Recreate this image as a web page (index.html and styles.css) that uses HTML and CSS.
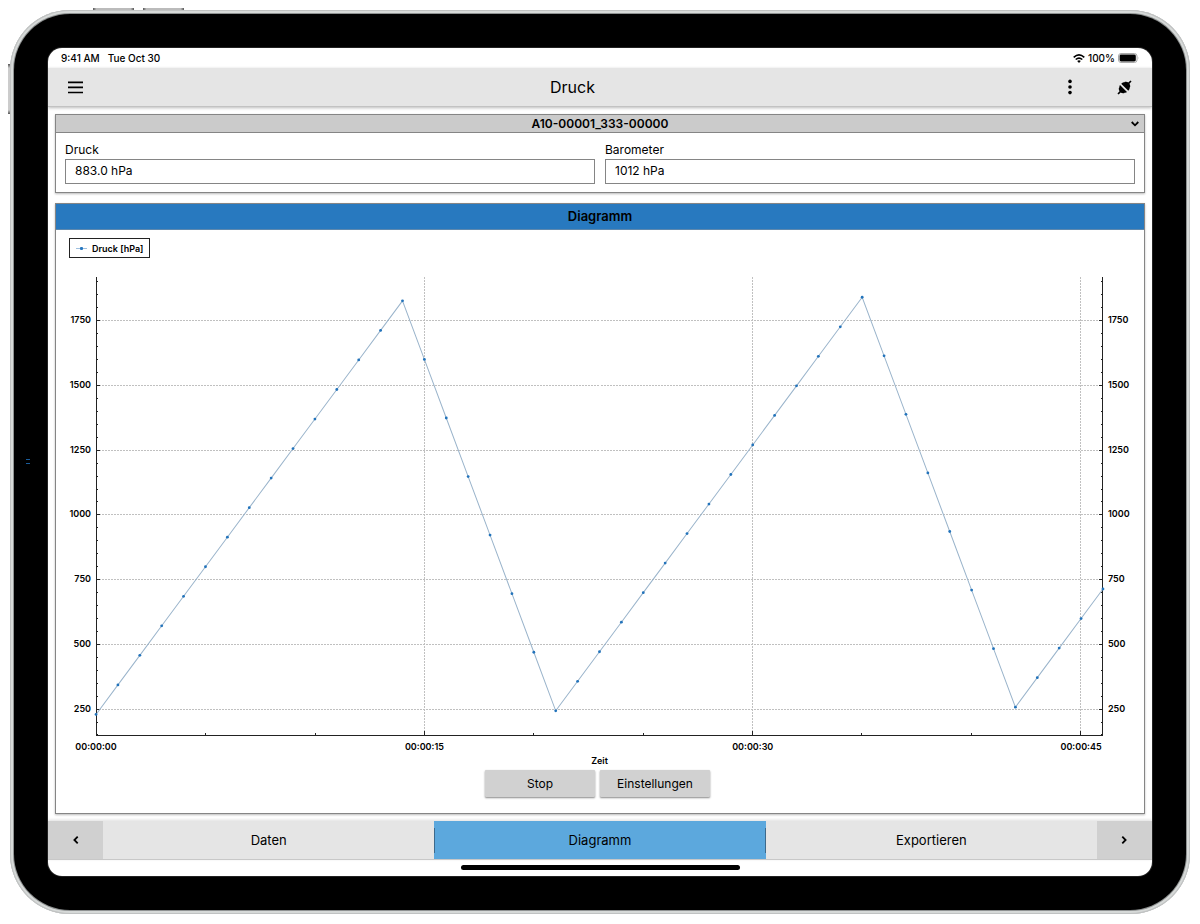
FILE: index.html
```html
<!DOCTYPE html>
<html lang="de">
<head>
<meta charset="utf-8">
<meta name="viewport" content="width=device-width, initial-scale=1">
<title>Druck</title>
<link rel="stylesheet" href="styles.css">
</head>
<body>
<div class="device">
  <span class="key key-top-a"></span>
  <span class="key key-top-b"></span>
  <span class="key key-side"></span>
  <div class="bezel">
    <span class="camera"></span>
    <div class="screen">
      <div class="status">
        <span>9:41 AM</span>
        <span>Tue Oct 30</span>
        <span class="status-right">
          <svg width="12" height="9" viewBox="0 0 12 9" fill="none" stroke="#000" stroke-width="1.6" aria-hidden="true">
            <path d="M0.7 3.3Q6-1.4 11.3 3.3M2.7 5.5Q6 2.6 9.3 5.5"/>
            <path d="M4.2 6.9Q6 5.4 7.8 6.9L6 8.9Z" fill="#000" stroke="none"/>
          </svg>
          <span>100%</span>
          <svg width="21" height="10" viewBox="0 0 21 10" aria-hidden="true">
            <rect x="0.5" y="0.5" width="18.5" height="9" rx="2.5" fill="#fff" stroke="#aaa"/>
            <rect x="1.6" y="1.6" width="16.2" height="6.8" rx="1.4" fill="#000"/>
            <path d="M19.9 3.5Q21 5 19.9 6.5Z" fill="#aaa"/>
          </svg>
        </span>
      </div>

      <header class="toolbar">
        <button class="icon-button" type="button" aria-label="Menü">
          <svg width="15" height="13" viewBox="0 0 15 13" stroke="#000" stroke-width="1.7"><path d="M0 1.3H15M0 6.4H15M0 11.5H15"/></svg>
        </button>
        <h1 class="title">Druck</h1>
        <button class="icon-button" type="button" aria-label="Mehr">
          <svg width="4" height="16" viewBox="0 0 4 16"><circle cx="2" cy="2.4" r="1.8"/><circle cx="2" cy="8" r="1.8"/><circle cx="2" cy="13.6" r="1.8"/></svg>
        </button>
        <button class="icon-button" type="button" aria-label="Verbindung">
          <svg width="15" height="15" viewBox="0 0 15 15">
            <path d="M1 14L3.4 11.6M11.6 3.4L14 1" stroke="#000" stroke-width="1.6"/>
            <path d="M3 5L10 12L8.8 12.7L8 12.4L7 13.2Q4.9 13.6 3.1 11.9Q1.4 10.1 1.8 8L2.6 7L2.3 6.2Z"/>
            <path d="M4.2 3.7L11.3 10.8L12.7 8.8L12.4 8L13.2 7Q13.6 4.9 11.9 3.1Q10.1 1.4 8 1.8L7 2.6L6.2 2.3Z"/>
          </svg>
        </button>
      </header>

      <main class="content">
        <section class="card">
          <button class="device-select" type="button">
            <span>A10-00001_333-00000</span>
            <svg class="chevron" width="8" height="6" viewBox="0 0 8 6" fill="none" stroke="#000" stroke-width="1.8"><path d="M0.7 1L4 4.3L7.3 1"/></svg>
          </button>
          <div class="fields">
            <div class="field">
              <label for="druck">Druck</label>
              <input id="druck" type="text" value="883.0 hPa" readonly>
            </div>
            <div class="field">
              <label for="barometer">Barometer</label>
              <input id="barometer" type="text" value="1012 hPa" readonly>
            </div>
          </div>
        </section>

        <section class="card card-chart">
          <h2 class="card-title">Diagramm</h2>
          <div class="legend">
            <svg width="11" height="5" viewBox="0 0 11 5" aria-hidden="true"><path d="M0 2.5H11" stroke="#9dbfdf"/><rect x="4" y="1" width="3" height="3" rx="1" fill="#2878c0"/></svg>
            <span>Druck [hPa]</span>
          </div>
          <svg class="chart" id="chart" viewBox="0 0 1087 512" role="img" aria-label="Druck in hPa über Zeit"></svg>
          <div class="actions">
            <button class="action" type="button">Stop</button>
            <button class="action" type="button">Einstellungen</button>
          </div>
        </section>
      </main>

      <nav class="tabs">
        <button class="tab-arrow" type="button" aria-label="Zurück">
          <svg width="6" height="8" viewBox="0 0 6 8" fill="none" stroke="#000" stroke-width="1.8"><path d="M4.7 0.7L1.4 4L4.7 7.3"/></svg>
        </button>
        <button class="tab" type="button">Daten</button>
        <button class="tab tab-active" type="button" aria-current="page">Diagramm</button>
        <button class="tab" type="button">Exportieren</button>
        <button class="tab-arrow" type="button" aria-label="Weiter">
          <svg width="6" height="8" viewBox="0 0 6 8" fill="none" stroke="#000" stroke-width="1.8"><path d="M1.3 0.7L4.6 4L1.3 7.3"/></svg>
        </button>
      </nav>
      <div class="home"><span class="home-bar"></span></div>
    </div>
  </div>
</div>
<script src="chart.js"></script>
</body>
</html>
```
FILE: styles.css
```css
*, *::before, *::after { box-sizing: border-box; }

body {
  margin: 0;
  padding: 10px;
  background: #fff;
  color: #000;
  font-family: Inter, "Liberation Sans", sans-serif;
  font-size: 12px;
}

button {
  font: inherit;
  color: inherit;
  border: 0;
  padding: 0;
  background: none;
  cursor: pointer;
}

/* Tablet frame */
.device {
  position: relative;
  display: flex;
  min-height: calc(100vh - 20px);
  padding: 4px;
  border-radius: 60px;
  background: #8f9292;
  box-shadow: inset 0 0 0 1px #c0c2c2, inset 0 0 0 3px #d6d9d8;
}
.key { position: absolute; background: linear-gradient(90deg, #555, #bbb 8%, #bbb 92%, #555); height: 2px; top: -2px; width: 41px; }
.key-top-a { left: 83px; }
.key-top-b { left: 133px; }
.key-side { left: -2px; top: 54px; width: 2px; height: 50px; background: linear-gradient(#555, #ccc 8%, #ccc 92%, #555); }
.bezel {
  position: relative;
  flex: 1;
  display: flex;
  min-width: 0;
  padding: 34px;
  border-radius: 56px;
  background: #000;
}
.camera {
  position: absolute;
  left: 12px;
  top: 50%;
  width: 4px;
  height: 5px;
  margin-top: -3px;
  border: solid #1a5c9a;
  border-width: 1px 0;
}
.screen {
  flex: 1;
  min-width: 0;
  display: flex;
  flex-direction: column;
  border-radius: 14px;
  overflow: hidden;
  background: #fff;
  box-shadow: 0 0 0 1px #222;
}

.status {
  display: flex;
  align-items: center;
  gap: 8px;
  height: 20px;
  padding: 0 13px;
  font-size: 10px;
  font-weight: 500;
}
.status-right { display: flex; align-items: center; gap: 3px; margin-left: auto; }

.toolbar {
  display: grid;
  grid-template-columns: 55px 1fr 55px 55px;
  align-items: center;
  height: 39px;
  background: #e5e5e5;
  border-bottom: 1px solid #c2c2c2;
  box-shadow: 0 1px 3px #bbb;
}
.icon-button { display: flex; justify-content: center; }
.title { margin: 0; font-size: 16px; font-weight: 400; line-height: 20px; text-align: center; }

.content {
  flex: 1;
  display: flex;
  flex-direction: column;
  gap: 10px;
  padding: 7px;
}
.card {
  border: 1px solid #858585;
  background: #fff;
  box-shadow: 0 1px 2px #bbb;
}
.device-select {
  display: flex;
  justify-content: center;
  align-items: center;
  position: relative;
  width: 100%;
  height: 18px;
  background: #cbcbcb;
  border-bottom: 1px solid #858585;
  font-weight: 600;
}
.chevron { position: absolute; right: 5px; }
.fields { display: grid; grid-template-columns: 1fr 1fr; gap: 10px; padding: 9px 9px 8px; }
.field { display: flex; flex-direction: column; gap: 1px; }
.field label { line-height: 16px; }
.field input {
  width: 100%;
  height: 25px;
  padding: 0 9px 2px;
  border: 1px solid #858585;
  border-radius: 0;
  background: #fff;
  color: #000;
  font: inherit;
}

.card-chart { flex: 1; display: flex; flex-direction: column; }
.card-title {
  margin: 0;
  background: #2879bf;
  font-size: 13px;
  font-weight: 600;
  line-height: 25px;
  text-align: center;
  border-bottom: 1px solid #5e88ad;
}
.legend {
  align-self: flex-start;
  display: flex;
  align-items: center;
  gap: 5px;
  height: 20px;
  margin: 8px 13px 0;
  padding: 0 6px;
  border: 1px solid #222;
  font-size: 9px;
  font-weight: 600;
}
.chart { display: block; width: 100%; height: auto; }
.chart text { font-size: 9px; font-weight: 600; }
.axis { stroke: #222; stroke-width: 1; fill: none; shape-rendering: crispEdges; }
.grid { stroke: #c0c0c0; stroke-width: 1; stroke-dasharray: 2 1; fill: none; shape-rendering: crispEdges; }
.series { stroke: #9ab4cb; stroke-width: 1; fill: none; }
.marker { fill: #2273bb; }

.actions { display: flex; justify-content: center; margin-bottom: 15px; }
.action {
  width: 110px;
  height: 27px;
  margin-right: 5px;
  border-radius: 1px;
  background: #d1d1d1;
  box-shadow: 0 1px 2px #888;
}

.tabs {
  display: flex;
  height: 39px;
  background: #e5e5e5;
  border-bottom: 1px solid #c8c8c8;
  box-shadow: 0 -1px 3px #ddd;
  font-size: 13px;
}
.tab { flex: 1; }
.tab-active {
  background:
    linear-gradient(#3d6a8c, #3d6a8c) left center / 1px 25px no-repeat,
    linear-gradient(#3d6a8c, #3d6a8c) right center / 1px 25px no-repeat,
    #5ca8dd;
}
.tab-arrow { display: flex; justify-content: center; align-items: center; width: 55px; background: #d0d0d0; }

.home { display: flex; justify-content: center; padding: 5px 0 6px; }
.home-bar { width: 279px; height: 5px; border-radius: 3px; background: #000; }
```
FILE: chart.js
```js
const svg = document.getElementById("chart");
const plot = { left: 40, right: 1046, top: 19, bottom: 477 };
const labels = { 0: "00:00:00", 15: "00:00:15", 30: "00:00:30", 45: "00:00:45" };

const xOf = (t) => plot.left + (t * (plot.right - plot.left)) / 46;
const yOf = (v) => plot.bottom - (v - 148) * 0.2589;

function add(name, attrs, text) {
  const el = document.createElementNS("http://www.w3.org/2000/svg", name);
  for (const key in attrs) el.setAttribute(key, attrs[key]);
  if (text) el.textContent = text;
  svg.appendChild(el);
}

// Pressure rises by 114 hPa/s and falls by 226 hPa/s.
const values = [];
let value = 229;
for (let t = 0; t <= 46; t++) {
  values.push(value);
  const falling = (t >= 14 && t < 21) || (t >= 35 && t < 42);
  value += falling ? -226 : 114;
}

for (let v = 250; v <= 1750; v += 250) {
  const y = Math.round(yOf(v));
  add("path", { class: "grid", d: `M${plot.left} ${y}H${plot.right}` });
  add("text", { x: plot.left - 5, y: y + 3, "text-anchor": "end" }, String(v));
  add("text", { x: plot.right + 5, y: y + 3 }, String(v));
}
for (const t of [15, 30, 45]) {
  add("path", { class: "grid", d: `M${Math.round(xOf(t))} ${plot.top}V${plot.bottom}` });
}

let axis = `M${plot.left} ${plot.top}V${plot.bottom}H${plot.right}V${plot.top}`;
for (let v = 150; v <= 1900; v += 50) {
  const y = Math.round(yOf(v));
  const size = v % 250 === 0 ? 4 : 2;
  axis += `M${plot.left} ${y}h${size}M${plot.right} ${y}h${-size}`;
}
for (let t = 5; t <= 45; t += 5) {
  axis += `M${Math.round(xOf(t))} ${plot.bottom}v${t % 15 === 0 ? -4 : -2}`;
}
add("path", { class: "axis", d: axis });

const points = values.map((v, t) => [xOf(t), yOf(v)]);
add("polyline", { class: "series", points: points.map((p) => p.join(",")).join(" ") });
for (const [x, y] of points) add("circle", { class: "marker", cx: x, cy: y, r: 1.4 });

for (const t in labels) {
  add("text", { x: xOf(Number(t)), y: 492, "text-anchor": "middle" }, labels[t]);
}
add("text", { x: 543, y: 506, "text-anchor": "middle" }, "Zeit");
```
